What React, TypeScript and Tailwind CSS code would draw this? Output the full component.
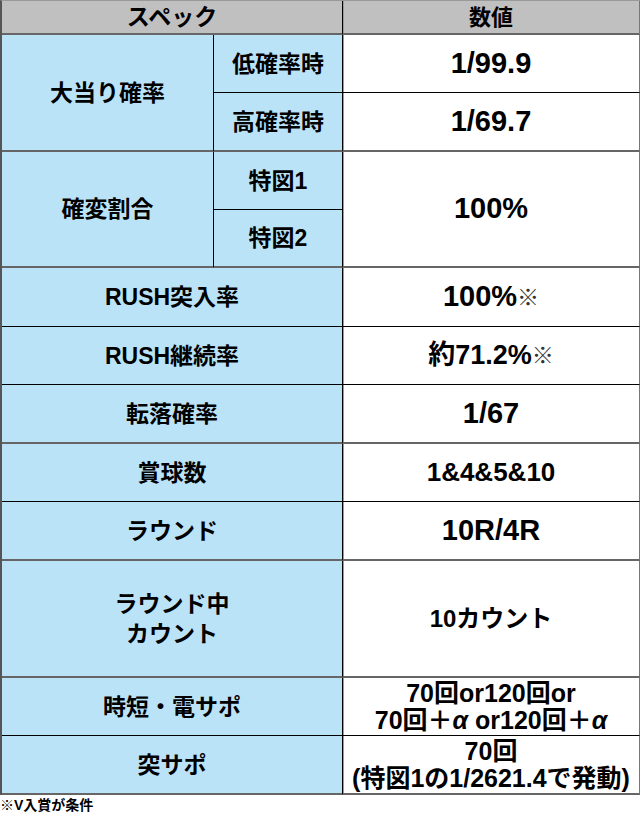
import React from "react";

const L = "bg-[#bbe3f8] flex items-center justify-center text-center text-[23px] font-bold text-black leading-[30px]";
const V = "bg-white flex items-center justify-center text-center font-bold text-black shadow-[inset_1px_0_0_#9a9a9a] border-r border-r-[#777]";
const G = "border-b-2 border-b-[#666]";
const B = "border-b border-b-black";

export default function App() {
  return (
    <div className="w-[640px] h-[815px] bg-white font-[Liberation_Sans,Noto_Sans_CJK_JP,sans-serif] text-black">
      <div className="grid grid-cols-[212px_129px_297px] grid-rows-[34px_58px_59px_58px_58px_59px_58px_59px_58px_59px_117px_58px_59px] border-l-2 border-l-[#555] border-t border-t-[#999]">
        <div className={`col-span-2 bg-[#c0c0c0] flex items-center justify-center text-[23px] font-bold border-r border-r-black ${G}`}>スペック</div>
        <div className={`bg-[#c0c0c0] flex items-center justify-center text-[22px] font-bold border-r border-r-[#777] shadow-[inset_1px_0_0_#9a9a9a] ${G}`}>数値</div>

        <div className={`row-span-2 ${L} border-r border-r-black ${G}`}>大当り確率</div>
        <div className={`${L} border-r border-r-black ${B}`}>低確率時</div>
        <div className={`${V} ${B} text-[29px]`}>1/99.9</div>
        <div className={`${L} border-r border-r-black ${G}`}>高確率時</div>
        <div className={`${V} ${G} text-[29px]`}>1/69.7</div>

        <div className={`row-span-2 ${L} border-r border-r-black ${G}`}>確変割合</div>
        <div className={`${L} border-r border-r-black ${B}`}>特図1</div>
        <div className={`row-span-2 ${V} ${G} text-[29px]`}>100%</div>
        <div className={`${L} border-r border-r-black ${G}`}>特図2</div>

        <div className={`col-span-2 ${L} border-r border-r-black ${B}`}>RUSH突入率</div>
        <div className={`${V} ${B} text-[29px]`}>100%<span className="font-normal text-[22px] text-[#333]">※</span></div>

        <div className={`col-span-2 ${L} border-r border-r-black ${B}`}>RUSH継続率</div>
        <div className={`${V} ${B} text-[27px]`}>約71.2%<span className="font-normal text-[22px] text-[#333]">※</span></div>

        <div className={`col-span-2 ${L} border-r border-r-black ${G}`}>転落確率</div>
        <div className={`${V} ${G} text-[29px]`}>1/67</div>

        <div className={`col-span-2 ${L} border-r border-r-black ${B}`}>賞球数</div>
        <div className={`${V} ${B} text-[26px]`}>1&amp;4&amp;5&amp;10</div>

        <div className={`col-span-2 ${L} border-r border-r-black ${G}`}>ラウンド</div>
        <div className={`${V} ${G} text-[29px]`}>10R/4R</div>

        <div className={`col-span-2 ${L} border-r border-r-black ${G}`}>
          <div>
            ラウンド中
            <br />
            カウント
          </div>
        </div>
        <div className={`${V} ${G} text-[24px]`}>10カウント</div>

        <div className={`col-span-2 ${L} border-r border-r-black ${B}`}>時短・電サポ</div>
        <div className={`${V} ${B} text-[25px] leading-[27px]`}>
          <div>
            70回or120回or
            <br />
            70回＋<i>α</i> or120回＋<i>α</i>
          </div>
        </div>

        <div className={`col-span-2 ${L} border-r border-r-black ${G}`}>突サポ</div>
        <div className={`${V} ${G} text-[25px] leading-[27px]`}>
          <div>
            70回
            <br />
            (特図1の1/2621.4で発動)
          </div>
        </div>
      </div>
      <div className="text-[14px] font-bold leading-[18px] pt-[1px]">※V入賞が条件</div>
    </div>
  );
}
